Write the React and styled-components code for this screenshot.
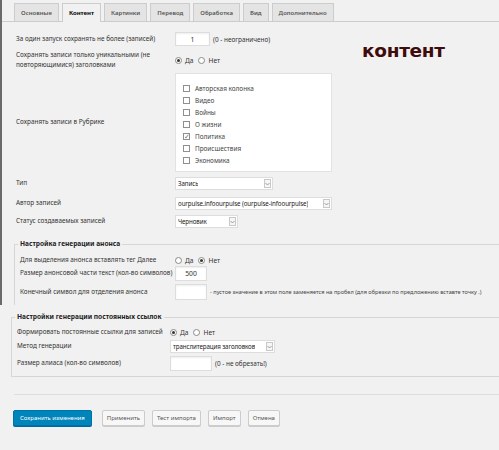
import styled, { createGlobalStyle } from "styled-components";

const GlobalStyle = createGlobalStyle`
  html, body {
    margin: 0;
    padding: 0;
    background: #f1f1f1;
  }
  body {
    font-family: "Noto Sans", "Open Sans", sans-serif;
    color: #333;
    width: 499px;
    height: 450px;
    overflow: hidden;
  }
`;

const tabs = [
  "Основные",
  "Контент",
  "Картинки",
  "Перевод",
  "Обработка",
  "Вид",
  "Дополнительно",
];

const rubrics = [
  { name: "Авторская колонка" },
  { name: "Видео" },
  { name: "Войны" },
  { name: "О жизни" },
  { name: "Политика", checked: true },
  { name: "Происшествия" },
  { name: "Экономика" },
];

function Radio({ checked, label }) {
  return (
    <RadioLabel>
      <RadioCircle $checked={checked} />
      {label}
    </RadioLabel>
  );
}

function Select({ width, value }) {
  return (
    <SelectBox $width={width}>
      <SelectValue>{value}</SelectValue>
      <SelectArrow>
        <svg width="5" height="4" viewBox="0 0 5 4">
          <path d="M0.5 1 L2.5 3 L4.5 1" fill="none" stroke="#888" strokeWidth="0.8" />
        </svg>
      </SelectArrow>
    </SelectBox>
  );
}

function App() {
  return (
    <>
      <GlobalStyle />
      <Page>
        <Top>
          <TabBar>
            {tabs.map((t) => (
              <Tab key={t} $active={t === "Контент"}>
                {t}
              </Tab>
            ))}
          </TabBar>

          <Form>
            <Annotation>контент</Annotation>

            <Row $mt={10}>
              <Label $w={159}>За один запуск сохранять не более (записей)</Label>
              <TextInput $w={35} $h={14}>1</TextInput>
              <Hint>(0 - неограничено)</Hint>
            </Row>

            <Row $mt={4}>
              <Label $w={159} $lh={10}>
                Сохранять записи только уникальными (не
                <br />
                повторяющимися) заголовками
              </Label>
              <Radio checked label="Да" />
              <Radio label="Нет" />
            </Row>

            <Row $mt={3}>
              <Label $w={159}>Сохранять записи в Рубрике</Label>
              <CategoryBox>
                {rubrics.map((r) => (
                  <CategoryItem key={r.name}>
                    <Checkbox>{r.checked && "✓"}</Checkbox>
                    {r.name}
                  </CategoryItem>
                ))}
              </CategoryBox>
            </Row>

            <Row $mt={5}>
              <Label $w={159}>Тип</Label>
              <Select width={98} value="Запись" />
            </Row>

            <Row $mt={7}>
              <Label $w={159}>Автор записей</Label>
              <Select width={157} value="ourpulse.infoourpulse (ourpulse-infoourpulse)" />
            </Row>

            <Row $mt={5}>
              <Label $w={159}>Статус создаваемых записей</Label>
              <Select width={63} value="Черновик" />
            </Row>
          </Form>

          <AnnounceSet>
            <Legend>Настройка генерации анонса</Legend>
            <Row $mt={5} $h={12}>
              <Label $w={155}>Для выделения анонса вставлять тег Далее</Label>
              <Radio label="Да" />
              <Radio checked label="Нет" />
            </Row>
            <Row $mt={0}>
              <Label $w={155}>Размер анонсовой части текст (кол-во символов)</Label>
              <TextInput $w={32} $h={15}>500</TextInput>
            </Row>
            <Row $mt={3}>
              <Label $w={155}>Конечный символ для отделения анонса</Label>
              <TextInput $w={32} $h={16} />
              <SmallHint>
                - пустое значение в этом поле заменяется на пробел (для обрезки по
                предложению вставте точку .)
              </SmallHint>
            </Row>
          </AnnounceSet>
        </Top>

        <LinksSet>
          <Legend>Настройки генерации постоянных ссылок</Legend>
          <Row $mt={4} $h={12}>
            <Label $w={153}>Формировать постоянные ссылки для записей</Label>
            <Radio checked label="Да" />
            <Radio label="Нет" />
          </Row>
          <Row $mt={2}>
            <Label $w={153}>Метод генерации</Label>
            <Select width={105} value="транслитерация заголовков" />
          </Row>
          <Row $mt={3}>
            <Label $w={153}>Размер алиаса (кол-во символов)</Label>
            <TextInput $w={42} $h={15} />
            <Hint>(0 - не обрезать!)</Hint>
          </Row>
        </LinksSet>

        <Separator />

        <Buttons>
          <Button $primary>Сохранить изменения</Button>
          <Button>Применить</Button>
          <Button>Тест импорта</Button>
          <Button>Импорт</Button>
          <Button>Отмена</Button>
        </Buttons>
      </Page>
    </>
  );
}

const Page = styled.div`
  width: 499px;
  height: 450px;
`;

const Top = styled.div`
  border-left: 2px solid #6b6b6b;
  padding-top: 3px;
`;

const TabBar = styled.div`
  display: flex;
  gap: 3px;
  padding-left: 12px;
  height: 18px;
  border-bottom: 1px solid #ccc;
`;

const Tab = styled.div`
  display: flex;
  align-items: center;
  padding: 0 6px;
  box-sizing: border-box;
  border: 1px solid #ccc;
  border-bottom: none;
  background: ${(p) => (p.$active ? "#f1f1f1" : "#e4e4e4")};
  color: ${(p) => (p.$active ? "#000" : "#555")};
  font-size: 6px;
  font-weight: ${(p) => (p.$active ? 700 : 600)};
  margin-bottom: ${(p) => (p.$active ? "-1px" : "0")};
  height: ${(p) => (p.$active ? "19px" : "18px")};
`;

const Form = styled.div`
  position: relative;
  padding-left: 14px;
`;

const Annotation = styled.div`
  position: absolute;
  left: 360px;
  top: 8px;
  font-family: "DejaVu Sans", sans-serif;
  font-weight: 700;
  font-size: 18.5px;
  color: #3f0c0c;
  letter-spacing: -0.3px;
`;

const Row = styled.div`
  display: flex;
  align-items: center;
  margin-top: ${(p) => p.$mt}px;
  min-height: ${(p) => p.$h || 0}px;
`;

const Label = styled.div`
  width: ${(p) => p.$w}px;
  flex-shrink: 0;
  font-size: 6.4px;
  line-height: ${(p) => p.$lh || 8.5}px;
  color: #333;
`;

const TextInput = styled.div`
  width: ${(p) => p.$w}px;
  height: ${(p) => p.$h}px;
  box-sizing: border-box;
  background: #fff;
  border: 1px solid #ddd;
  box-shadow: inset 0 1px 2px rgba(0, 0, 0, 0.07);
  display: flex;
  align-items: center;
  justify-content: center;
  font-size: 6.8px;
  color: #333;
`;

const Hint = styled.span`
  margin-left: 3px;
  font-size: 6.4px;
  color: #333;
`;

const SmallHint = styled.span`
  margin-left: 3px;
  font-size: 5.6px;
  color: #444;
  white-space: nowrap;
`;

const RadioLabel = styled.label`
  display: flex;
  align-items: center;
  gap: 3px;
  margin-right: 5px;
  font-size: 6.6px;
  color: #333;
`;

const RadioCircle = styled.span`
  width: 7px;
  height: 7px;
  box-sizing: border-box;
  border-radius: 50%;
  border: 1px solid #8a8a8a;
  background: #fff;
  display: flex;
  align-items: center;
  justify-content: center;

  &::after {
    content: "";
    width: 3px;
    height: 3px;
    border-radius: 50%;
    background: ${(p) => (p.$checked ? "#333" : "transparent")};
  }
`;

const CategoryBox = styled.div`
  width: 157px;
  height: 99px;
  box-sizing: border-box;
  background: #fff;
  border: 1px solid #e2e2e2;
  padding: 8px 0 0 7px;
  display: flex;
  flex-direction: column;
`;

const CategoryItem = styled.div`
  display: flex;
  align-items: center;
  height: 12px;
  gap: 5px;
  font-size: 6.4px;
  color: #444;
`;

const Checkbox = styled.span`
  width: 7px;
  height: 7px;
  box-sizing: border-box;
  border: 1px solid #8f8f8f;
  background: #fff;
  display: flex;
  align-items: center;
  justify-content: center;
  font-size: 7px;
  line-height: 1;
  color: #777;
`;

const SelectBox = styled.div`
  width: ${(p) => p.$width}px;
  height: 13px;
  box-sizing: border-box;
  background: #fff;
  border: 1px solid #ddd;
  display: flex;
  align-items: center;
  justify-content: space-between;
  padding-left: 2px;
  padding-right: 1px;
`;

const SelectValue = styled.span`
  font-size: 6.2px;
  letter-spacing: -0.1px;
  color: #222;
  white-space: nowrap;
  overflow: hidden;
`;

const SelectArrow = styled.span`
  width: 7px;
  height: 9px;
  flex-shrink: 0;
  margin-left: 1px;
  box-sizing: border-box;
  border: 1px solid #c8c8c8;
  background: #f6f6f6;
  display: flex;
  align-items: center;
  justify-content: center;
`;

const Fieldset = styled.fieldset`
  margin: 0;
  padding: 0 0 0 5px;
  border: 1px solid #d6d6d6;
  border-right: none;
  min-width: 0;
`;

const AnnounceSet = styled(Fieldset)`
  margin: 11px 0 0 12px;
  padding-bottom: 5px;
  border-bottom: none;
`;

const LinksSet = styled(Fieldset)`
  margin: 7px 0 0 11px;
  padding-bottom: 5px;
`;

const Legend = styled.legend`
  padding: 0 2px;
  margin-left: -2px;
  font-size: 6.6px;
  font-weight: 700;
  color: #222;
  line-height: 10px;
`;

const Separator = styled.div`
  margin: 17px 0 0 14px;
  border-top: 1px solid #ddd;
`;

const Buttons = styled.div`
  display: flex;
  gap: 7px;
  padding: 15px 0 0 13px;
`;

const Button = styled.button`
  height: 16px;
  padding: 0 ${(p) => (p.$primary ? 6 : 4)}px;
  font-family: "Noto Sans", "Open Sans", sans-serif;
  font-size: 6px;
  border-radius: 2px;
  border: 1px solid ${(p) => (p.$primary ? "#0073aa" : "#ccc")};
  background: ${(p) => (p.$primary ? "#0085ba" : "#f7f7f7")};
  color: ${(p) => (p.$primary ? "#fff" : "#555")};
  box-shadow: 0 1px 0 ${(p) => (p.$primary ? "#006799" : "#ccc")};
  margin-right: ${(p) => (p.$primary ? "3px" : "0")};
`;

export default App;
